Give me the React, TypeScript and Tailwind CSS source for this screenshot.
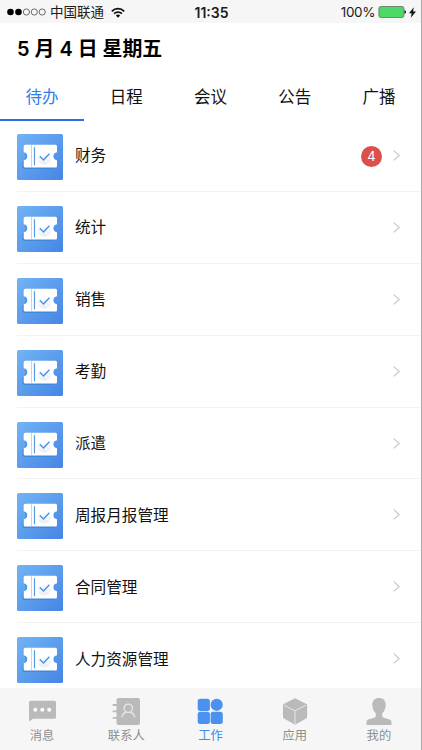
import { useState } from "react";
import type { ReactNode } from "react";
import clsx from "clsx";

const TABS = ["待办", "日程", "会议", "公告", "广播"];

const ITEMS = [
  { title: "财务", count: 4 },
  { title: "统计", count: 0 },
  { title: "销售", count: 0 },
  { title: "考勤", count: 0 },
  { title: "派遣", count: 0 },
  { title: "周报月报管理", count: 0 },
  { title: "合同管理", count: 0 },
  { title: "人力资源管理", count: 0 },
];

const NAV: { label: string; icon: ReactNode }[] = [
  {
    label: "消息",
    icon: (
      <svg viewBox="0 0 28 28" className="w-7 h-7">
        <path d="M2.5 3.700h24a1.500 1.500 0 0 1 1.500 1.500v15a1.500 1.500 0 0 1-1.500 1.500H5l-4 2.800V5.200A1.500 1.500 0 0 1 2.500 3.700z" fill="#bababa" />
        <circle cx="7.300" cy="12.700" r="2" fill="#fff" />
        <circle cx="14.300" cy="12.700" r="2" fill="#fff" />
        <circle cx="21.200" cy="12.700" r="2" fill="#fff" />
      </svg>
    ),
  },
  {
    label: "联系人",
    icon: (
      <svg viewBox="0 0 28 28" className="w-7 h-7">
        <rect x="4.500" y="1" width="23.500" height="27" rx="2.200" fill="#bababa" />
        <path d="M.7 8H5M.7 14.300H5M.7 20.800H5" stroke="#bababa" strokeWidth="1.800" />
        <g fill="none" stroke="#e6e6e6" strokeWidth="1.400">
          <circle cx="16.300" cy="11.300" r="4.200" />
          <path d="M10 20.300c.3-3.200 2.200-4.600 4.400-5.200M22.600 20.300c-.3-3.200-2.200-4.600-4.400-5.200" />
        </g>
      </svg>
    ),
  },
  {
    label: "工作",
    icon: (
      <svg viewBox="0 0 28 28" className="w-7 h-7" fill="#4a92ee">
        <rect x="1.700" y="1.700" width="12.200" height="12.200" rx="2.500" />
        <circle cx="20.700" cy="7.800" r="6.100" />
        <rect x="1.700" y="14.800" width="12.200" height="12.200" rx="2.500" />
        <rect x="14.600" y="14.800" width="12.200" height="12.200" rx="2.500" />
      </svg>
    ),
  },
  {
    label: "应用",
    icon: (
      <svg viewBox="0 0 28 28" className="w-7 h-7">
        <path d="M14 1.200 25.500 7q.6.300.6 1v12.300q0 .7-.6 1L14 27.700 2.600 21.300q-.6-.3-.6-1V8q0-.7.600-1z" fill="#bababa" />
        <path d="M3 8.200 14 13.800 25 8.200M14 13.800V27" fill="none" stroke="#e6e6e6" strokeWidth="1" />
      </svg>
    ),
  },
  {
    label: "我的",
    icon: (
      <svg viewBox="0 0 28 28" className="w-7 h-7" fill="#bababa">
        <path d="M14 1c4 0 6.700 2.600 6.700 7 0 3.600-1.500 6.500-3.500 8.400v2.700c0 .9.500 1.300 1.500 1.600l5.300 1.600c1.800.6 2.500 1.500 2.500 3.300V28h-25v-2.400c0-1.800.7-2.700 2.500-3.300l5.300-1.600c1-.3 1.500-.7 1.500-1.600v-2.700C8.800 14.500 7.300 11.600 7.300 8c0-4.400 2.700-7 6.700-7z" />
      </svg>
    ),
  },
];

function TicketIcon() {
  return (
    <svg viewBox="0 0 46 46" className="w-[46px] h-[46px] shrink-0">
      <defs>
        <linearGradient id="tile" x1="0" y1="0" x2="1" y2="1">
          <stop offset="0" stopColor="#72b4f4" />
          <stop offset="1" stopColor="#4585e5" />
        </linearGradient>
        <linearGradient id="disc" x1="0" y1="0" x2="0" y2="1">
          <stop offset=".3" stopColor="#fff" />
          <stop offset="1" stopColor="#e8eef5" />
        </linearGradient>
      </defs>
      <rect width="46" height="46" rx="1.500" fill="url(#tile)" />
      <path d="M6.700 26.500 5.500 28v5q0 2 2 2H36q1.500 0 1.500-1.200V28z" fill="#3a84d8" opacity=".8" />
      <path d="M6.700 18.300q3.200.9 3.200 3.900t-3.200 4.200q1.900-1.600 1.900-4.100t-1.900-4z" fill="#3a84d8" opacity=".6" />
      <path d="M8.200 10.800h30.300q1.500 0 1.500 1.500v6q-3.600.6-3.600 4t3.600 4v5.700q0 1.500-1.500 1.500H8.200q-1.500 0-1.500-1.500v-5.700q3.600-.6 3.600-4t-3.600-4v-6q0-1.500 1.500-1.500z" fill="#fff" />
      <path d="M14.500 11.500v22" stroke="#7ab0ef" strokeWidth="1" strokeDasharray="1 1" />
      <path d="M17.500 13.200v18" stroke="#5298eb" strokeWidth="1.200" />
      <circle cx="27.300" cy="23" r="7.500" fill="url(#disc)" />
      <path d="m22.800 22.300 3.700 3.600 5.900-6.200" fill="none" stroke="#4b91e6" strokeWidth="1.400" />
    </svg>
  );
}

function StatusBar() {
  return (
    <div className="h-[23px] shrink-0 bg-[#f6f6f6] grid grid-cols-[1fr_auto_1fr] items-center pl-[7px] pr-[5px] text-[#1c1c1c]">
      <div className="flex items-center">
        <svg viewBox="0 0 39 8" className="w-[39px] h-2">
          <circle cx="3.500" cy="4" r="3.300" />
          <circle cx="11.500" cy="4" r="3.300" />
          <g fill="none" stroke="#333" strokeWidth=".7">
            <circle cx="19.400" cy="4" r="3.100" />
            <circle cx="27.300" cy="4" r="3.100" />
            <circle cx="35.200" cy="4" r="3.100" />
          </g>
        </svg>
        <span className="ml-1 text-[13.5px] leading-[23px] pt-px">中国联通</span>
        <svg viewBox="0 0 14 11" className="ml-[7px] w-3.5 h-[11px]" fill="none" stroke="#111" strokeWidth="1.700">
          <path d="M.8 4.300a8.700 8.700 0 0 1 12.400 0M3.100 6.700a5.500 5.500 0 0 1 7.800 0" />
          <path d="M7 10.800 4.800 8.500a3.200 3.200 0 0 1 4.400 0z" fill="#111" stroke="none" />
        </svg>
      </div>
      <span className="text-[14px] leading-[23px] font-semibold">11:35</span>
      <div className="flex items-center justify-end">
        <span className="text-[13.5px] leading-[23px] tracking-[-0.4px] pt-px">100%</span>
        <svg viewBox="0 0 28 12" className="ml-[3px] w-7 h-3">
          <rect x=".9" y=".5" width="25" height="11" rx="1.800" fill="#4cd964" stroke="#6e7c70" strokeWidth=".9" />
          <path d="M26.400 4.200q1.600.2 1.600 1.800t-1.600 1.800z" fill="#111" />
        </svg>
        <svg viewBox="0 0 7 11" className="ml-[3px] w-[7px] h-[11px]">
          <path d="M4.800.3 0 6.200h2.700L1.800 10.700 7 4.500H4.100z" fill="#111" />
        </svg>
      </div>
    </div>
  );
}

function ItemRow({ title, count }: { title: string; count: number }) {
  return (
    <div className="h-[71.9px] shrink-0 ml-[17px] flex items-center pt-[3px] pr-[21px] border-b border-[#f3f3f3]">
      <TicketIcon />
      <span className="ml-[12px] flex-1 text-[15.6px] leading-6 -mt-px">{title}</span>
      {count > 0 && (
        <span className="mr-[11px] w-[21px] h-[21px] rounded-full bg-[#dc4f4b] text-white text-[13px] leading-[21px] text-center -mt-px">
          {count}
        </span>
      )}
      <svg viewBox="0 0 7 11" className="w-[7px] h-[11px] -mt-[3px]">
        <path d="m.8.700 5.400 4.800-5.400 4.800" fill="none" stroke="#c4c4c4" strokeWidth="1.100" />
      </svg>
    </div>
  );
}

export default function App() {
  const [tab, setTab] = useState(0);
  const [page, setPage] = useState(2);

  return (
    <div className="w-[422px] h-[750px] overflow-hidden flex flex-col bg-white border-r border-[#a9a9a9] text-[#111] font-['Inter','Noto_Sans_CJK_SC',sans-serif]">
      <StatusBar />

      <h1 className="h-[51px] shrink-0 pl-[17px] pt-px text-[19.9px] leading-[51px] font-semibold text-black">
        5 月 4 日 星期五
      </h1>

      <div className="h-[47px] shrink-0 grid grid-cols-5">
        {TABS.map((label, i) => (
          <button
            key={label}
            onClick={() => setTab(i)}
            className={clsx(
              "text-[16.5px] leading-[43px] pt-0.5 border-b-2",
              tab === i ? "text-[#2b7df0] border-[#2672e4]" : "border-transparent"
            )}
          >
            {label}
          </button>
        ))}
      </div>

      <div className="flex-1 min-h-0 overflow-hidden flex flex-col -mt-px">
        {ITEMS.map((item) => (
          <ItemRow key={item.title} title={item.title} count={item.count} />
        ))}
      </div>

      <div className="h-[62px] shrink-0 grid grid-cols-5 bg-[#f6f6f6]">
        {NAV.map((item, i) => (
          <button
            key={item.label}
            onClick={() => setPage(i)}
            className={clsx(
              "flex flex-col items-center pt-[9px] text-[12.3px] leading-[18px]",
              page === i ? "text-[#3c8bed]" : "text-[#8f8f8f]"
            )}
          >
            {item.icon}
            <span className="mt-0.5">{item.label}</span>
          </button>
        ))}
      </div>
    </div>
  );
}
